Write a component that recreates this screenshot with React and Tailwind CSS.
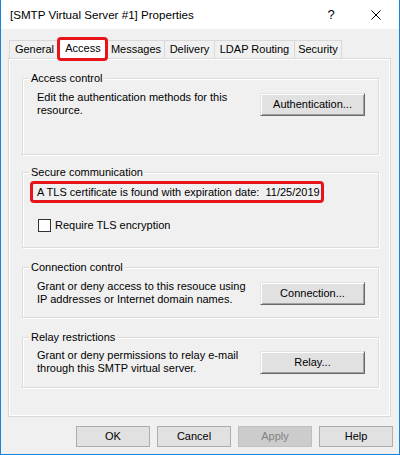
import React from "react";

const font = { fontFamily: '"Liberation Sans", Arial, sans-serif' };

function Tab({ label, w, selected, last }) {
  if (selected) {
    return (
      <div
        className={`relative z-10 h-[21px] -mb-px flex items-start justify-center pt-[3px] bg-white border border-b-0 border-[#d9d9d9] ${w}`}
      >
        {label}
      </div>
    );
  }
  return (
    <div
      className={`h-[18px] flex items-center justify-center bg-[#f0f0f0] border-t border-l border-[#d9d9d9] ${last ? "border-r" : ""} ${w}`}
    >
      {label}
    </div>
  );
}

function ClassicButton({ children }) {
  return (
    <div className="w-[105px] h-[23px] flex items-center justify-center bg-[#e1e1e1] border border-t-[#e3e3e3] border-l-[#e3e3e3] border-r-[#696969] border-b-[#696969] shadow-[inset_1px_1px_0_#ffffff,inset_-1px_-1px_0_#a0a0a0] text-black">
      {children}
    </div>
  );
}

function Group({ label, className, children }) {
  return (
    <div
      className={`relative w-[357px] border border-[#dcdcdc] shadow-[1px_1px_0_#ffffff,inset_1px_1px_0_#ffffff] ${className}`}
    >
      <div className="absolute left-[6px] -top-[7px] px-[2px] bg-[#f0f0f0] leading-[13px]">
        {label}
      </div>
      {children}
    </div>
  );
}

function FlatButton({ children, disabled }) {
  return (
    <div
      className={`w-[74px] h-[21px] flex items-center justify-center border ${
        disabled
          ? "bg-[#cccccc] border-[#bfbfbf] text-[#838383]"
          : "bg-[#e1e1e1] border-[#adadad] text-black"
      }`}
    >
      {children}
    </div>
  );
}

export default function App() {
  return (
    <div
      style={font}
      className="w-[400px] h-[455px] bg-[#f0f0f0] border-l border-r border-b border-[#1883d7] flex flex-col text-[11px] text-black leading-[13px] overflow-hidden"
    >
      {/* Title bar */}
      <div className="h-[29px] bg-white flex items-center shrink-0">
        <div className="pl-[9px] text-[11.6px] flex-1">[SMTP Virtual Server #1] Properties</div>
        <div className="w-[14px] text-[13px] mr-[33px] text-center">?</div>
        <svg width="10" height="10" viewBox="0 0 10 10" className="mr-[18px]">
          <path d="M0.5 0.5 L9.5 9.5 M9.5 0.5 L0.5 9.5" stroke="#000" strokeWidth="1" fill="none" />
        </svg>
      </div>

      {/* Tabs */}
      <div className="relative mt-[9px] pl-[8px] h-[20px] flex items-end shrink-0">
        <Tab label="General" w="w-[50px]" />
        <Tab label="Access" w="w-[48px]" selected />
        <Tab label="Messages" w="w-[57px]" />
        <Tab label="Delivery" w="w-[50px]" />
        <Tab label="LDAP Routing" w="w-[80px]" />
        <Tab label="Security" w="w-[48px]" last />
        <div className="absolute left-[56px] -top-[1px] w-[51px] h-[24px] border-[3px] border-[#e8141c] rounded-[4px] z-20" />
      </div>

      {/* Panel */}
      <div className="ml-[7px] w-[383px] h-[359px] border border-[#d9d9d9] shadow-[inset_1px_1px_0_#ffffff,inset_-1px_-1px_0_#ffffff] bg-[#f0f0f0] pt-[19px] pl-[13px] flex flex-col shrink-0">
        <Group label="Access control" className="h-[77px] pt-[12px]">
          <div className="flex items-center">
            <div className="pl-[14px] w-[237px] whitespace-nowrap">
              Edit the authentication methods for this
              <br />
              resource.
            </div>
            <ClassicButton>Authentication...</ClassicButton>
          </div>
        </Group>

        <Group label="Secure communication" className="h-[76px] mt-[17px] pt-[8px]">
          <div className="ml-[7px] w-[294px] h-[22px] border-[3px] border-[#e8141c] rounded-[4px] flex items-center pl-[4px] whitespace-pre">
            A TLS certificate is found with expiration date:  11/25/2019
          </div>
          <div className="mt-[16px] ml-[15px] flex items-center">
            <div className="w-[13px] h-[13px] border border-[#333333] bg-white" />
            <div className="ml-[4px]">Require TLS encryption</div>
          </div>
        </Group>

        <Group label="Connection control" className="h-[51px] mt-[19px] pt-[12px]">
          <div className="flex items-center">
            <div className="pl-[14px] w-[237px] whitespace-nowrap">
              Grant or deny access to this resouce using
              <br />
              IP addresses or Internet domain names.
            </div>
            <ClassicButton>Connection...</ClassicButton>
          </div>
        </Group>

        <Group label="Relay restrictions" className="h-[51px] mt-[19px] pt-[11px]">
          <div className="flex items-center">
            <div className="pl-[14px] w-[237px] whitespace-nowrap">
              Grant or deny permissions to relay e-mail
              <br />
              through this SMTP virtual server.
            </div>
            <ClassicButton>Relay...</ClassicButton>
          </div>
        </Group>
      </div>

      {/* Bottom buttons */}
      <div className="mt-[9px] pr-[6px] flex justify-end gap-[7px]">
        <FlatButton>OK</FlatButton>
        <FlatButton>Cancel</FlatButton>
        <FlatButton disabled>Apply</FlatButton>
        <FlatButton>Help</FlatButton>
      </div>
    </div>
  );
}
